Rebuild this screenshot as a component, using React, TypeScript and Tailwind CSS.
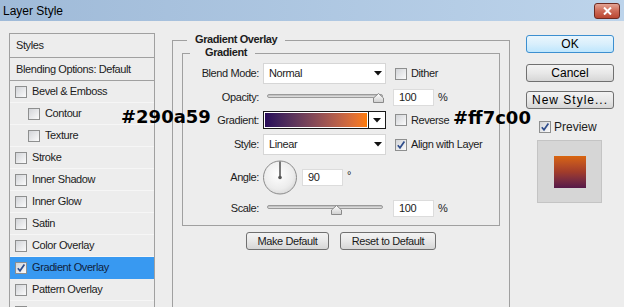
import React from 'react'

function Check({ checked = false }: { checked?: boolean }) {
  return (
    <span className="flex h-[12px] w-[12px] shrink-0 items-center justify-center border border-[#8e8f8f] bg-gradient-to-br from-[#d2d4d8] to-[#fbfbfb]">
      {checked && (
        <svg width="10" height="10" viewBox="0 0 10 10">
          <path d="M1.8 5.2 L4 7.8 L8.4 1.6" fill="none" stroke="#2f4d8c" strokeWidth="1.7" />
        </svg>
      )}
    </span>
  )
}

function Tri() {
  return (
    <svg width="8" height="5" viewBox="0 0 8 5">
      <polygon points="0,0 8,0 4,4.5" fill="#111" />
    </svg>
  )
}

function Select({ value }: { value: string }) {
  return (
    <div className="flex h-[21px] w-[123px] items-center justify-between border border-[#d6d6d6] bg-white pl-[5px] pr-[3px]">
      <span>{value}</span>
      <Tri />
    </div>
  )
}

function Field({ value }: { value: string }) {
  return (
    <div className="flex h-[17px] w-[41px] items-center border border-[#dcdcdc] bg-white pl-[5px]">
      {value}
    </div>
  )
}

function Thumb() {
  return (
    <svg width="11" height="10" viewBox="0 0 11 10">
      <defs>
        <linearGradient id="thumbg" x1="0" y1="0" x2="0" y2="1">
          <stop offset="0" stopColor="#ffffff" />
          <stop offset="1" stopColor="#cfcfcf" />
        </linearGradient>
      </defs>
      <polygon points="0.5,9.5 0.5,5 5.5,0.5 10.5,5 10.5,9.5" fill="url(#thumbg)" stroke="#8a8a8a" />
    </svg>
  )
}

function Slider({ at }: { at: 'end' | 'mid' }) {
  return (
    <div className="relative h-[17px] w-[123px]">
      <div className="absolute left-[4px] right-[3px] top-[5px] h-[4px] rounded-full border border-[#9a9a9a] bg-gradient-to-b from-[#b8b8b8] to-[#e6e6e6]" />
      <div className={at === 'end' ? 'absolute left-[110px] top-[4px]' : 'absolute left-[68px] top-[5px]'}>
        <Thumb />
      </div>
    </div>
  )
}

function Dial() {
  return (
    <svg width="34" height="35" viewBox="0 0 34 35">
      <defs>
        <radialGradient id="dialg" cx="0.45" cy="0.4" r="0.65">
          <stop offset="0" stopColor="#ffffff" />
          <stop offset="0.7" stopColor="#ececec" />
          <stop offset="1" stopColor="#d6d6d6" />
        </radialGradient>
      </defs>
      <circle cx="17" cy="17.5" r="16.5" fill="url(#dialg)" stroke="#8c8c8c" />
      <line x1="17" y1="17.5" x2="17" y2="1.5" stroke="#595959" strokeWidth="1.6" />
      <circle cx="17" cy="17.5" r="1.8" fill="#555" />
    </svg>
  )
}

function Row({ label, children }: { label: string; children: React.ReactNode }) {
  return (
    <div className="flex items-center">
      <span className="w-[76px] text-right">{label}</span>
      <div className="ml-[4px] flex items-center">{children}</div>
    </div>
  )
}

function GreyButton({ label, w }: { label: string; w: string }) {
  return (
    <button className={`h-[18px] ${w} rounded-[3px] border border-[#707070] bg-gradient-to-b from-[#f3f3f3] via-[#e8e8e8] to-[#d6d6d6] leading-[14px] text-[#1a1a1a]`}>
      {label}
    </button>
  )
}

// last row is cut by the window edge, only its checkbox shows
const items: { label: string; indent?: boolean; checked?: boolean; active?: boolean }[] = [
  { label: 'Bevel & Emboss' },
  { label: 'Contour', indent: true },
  { label: 'Texture', indent: true },
  { label: 'Stroke' },
  { label: 'Inner Shadow' },
  { label: 'Inner Glow' },
  { label: 'Satin' },
  { label: 'Color Overlay' },
  { label: 'Gradient Overlay', checked: true, active: true },
  { label: 'Pattern Overlay' },
  { label: '' },
]

export default function App() {
  return (
    <div className="relative h-[307px] w-[624px] overflow-hidden bg-[#ededed] font-['Liberation_Sans',Arial,sans-serif] text-[11px] tracking-[-0.4px] text-[#1c1c1c]">
      {/* title bar */}
      <div className="flex h-[21px] items-center justify-between bg-gradient-to-r from-[#9fbad8] to-[#bdd4eb] pl-[3px] pr-[4px]">
        <span className="text-[12px] tracking-normal text-black">Layer Style</span>
        <div className="flex h-[16px] w-[26px] items-center justify-center rounded-[3px] border border-[#6e2b22] bg-gradient-to-b from-[#e3a394] via-[#cd6a57] to-[#b94530]">
          <svg width="9" height="8" viewBox="0 0 9 8">
            <path d="M1 0.5 L8 7.5 M8 0.5 L1 7.5" stroke="#fff" strokeWidth="2" />
          </svg>
        </div>
      </div>

      <div className="flex items-start">
        {/* styles list */}
        <div className="ml-[9px] mt-[12px] h-[300px] w-[146px] border border-[#a0a0a0]">
          <div className="flex h-[24px] items-center border-b border-[#a0a0a0] pl-[6px]">Styles</div>
          <div className="flex h-[23px] items-center border-b border-[#a0a0a0] pl-[6px]">Blending Options: Default</div>
          {items.map((it, i) => (
            <div
              key={i}
              className={`flex h-[22px] items-center gap-[5px] border-b ${it.indent ? 'pl-[18px]' : 'pl-[5px]'} ${
                it.active ? 'border-[#3899f1] bg-[#3899f1] text-[#10223c]' : 'border-[#f6f6f6]'
              }`}
            >
              <Check checked={it.checked} />
              {it.label && <span>{it.label}</span>}
            </div>
          ))}
        </div>

        {/* gradient overlay group */}
        <fieldset className="ml-[17px] mt-[12px] h-[300px] w-[338px] border border-[#a0a0a0]">
          <legend className="ml-[14px] h-[15px] pb-[3px] pl-[8px] pr-[8px] font-bold leading-[12px]">Gradient Overlay</legend>
          <fieldset className="-mt-[2px] ml-[9px] w-[318px] border border-[#a0a0a0] pb-[8px]">
            <legend className="ml-[7px] h-[15px] pb-[3px] pl-[15px] pr-[8px] font-bold leading-[12px]">Gradient</legend>
            <div className="mt-[2px] flex flex-col gap-[5px]">
              <Row label="Blend Mode:">
                <Select value="Normal" />
                <div className="ml-[9px] flex items-center gap-[4px]">
                  <Check />
                  <span>Dither</span>
                </div>
              </Row>
              <Row label="Opacity:">
                <Slider at="end" />
                <div className="ml-[7px]">
                  <Field value="100" />
                </div>
                <span className="ml-[4px]">%</span>
              </Row>
              <Row label="Gradient:">
                <div className="flex h-[18px] w-[123px] border border-[#1a1a1a] bg-white">
                  <div className="m-[1px] flex-1 bg-gradient-to-r from-[#290a59] to-[#ff7c00]" />
                  <div className="flex w-[17px] items-center justify-center border-l border-[#1a1a1a]">
                    <Tri />
                  </div>
                </div>
                <div className="ml-[9px] flex items-center gap-[4px]">
                  <Check />
                  <span>Reverse</span>
                </div>
              </Row>
              <Row label="Style:">
                <Select value="Linear" />
                <div className="ml-[9px] flex items-center gap-[4px]">
                  <Check checked />
                  <span>Align with Layer</span>
                </div>
              </Row>
              <Row label="Angle:">
                <Dial />
                <div className="ml-[5px]">
                  <Field value="90" />
                </div>
                <span className="mb-[5px] ml-[4px]">°</span>
              </Row>
              <Row label="Scale:">
                <Slider at="mid" />
                <div className="ml-[7px]">
                  <Field value="100" />
                </div>
                <span className="ml-[4px]">%</span>
              </Row>
            </div>
          </fieldset>
          <div className="ml-[73px] mt-[6px] flex gap-[11px]">
            <GreyButton label="Make Default" w="w-[83px]" />
            <GreyButton label="Reset to Default" w="w-[96px]" />
          </div>
        </fieldset>

        {/* right column */}
        <div className="ml-[16px] mt-[14px] flex w-[88px] flex-col text-[12px] tracking-normal">
          <button className="h-[18px] rounded-[3px] border border-[#3c8fd0] bg-gradient-to-b from-[#eaf6fd] via-[#d9effc] to-[#bee6fd] leading-[14px] text-black">
            OK
          </button>
          <button className="mt-[11px] h-[18px] rounded-[3px] border border-[#707070] bg-gradient-to-b from-[#f3f3f3] via-[#e8e8e8] to-[#d6d6d6] leading-[14px] text-black">
            Cancel
          </button>
          <button className="mt-[9px] h-[18px] rounded-[3px] border border-[#707070] bg-gradient-to-b from-[#f3f3f3] via-[#e8e8e8] to-[#d6d6d6] leading-[14px] tracking-[1px] text-black">
            New Style...
          </button>
          <div className="ml-[13px] mt-[11px] flex h-[13px] items-center gap-[3px]">
            <Check checked />
            <span>Preview</span>
          </div>
          <div className="ml-[11px] mt-[7px] flex h-[63px] w-[65px] items-center justify-center border border-[#c4c4c4] bg-[#d6d6d6]">
            <div className="h-[32px] w-[32px] bg-gradient-to-b from-[#d9650c] via-[#a13c2a] to-[#561848]" />
          </div>
        </div>
      </div>

      {/* colour annotations */}
      <span className="absolute left-[121px] top-[108px] font-['DejaVu_Sans',sans-serif] text-[18px] font-bold leading-[18px] tracking-normal text-black">
        #290a59
      </span>
      <span className="absolute left-[453px] top-[109px] font-['DejaVu_Sans',sans-serif] text-[18px] font-bold leading-[18px] tracking-normal text-black">
        #ff7c00
      </span>
    </div>
  )
}
